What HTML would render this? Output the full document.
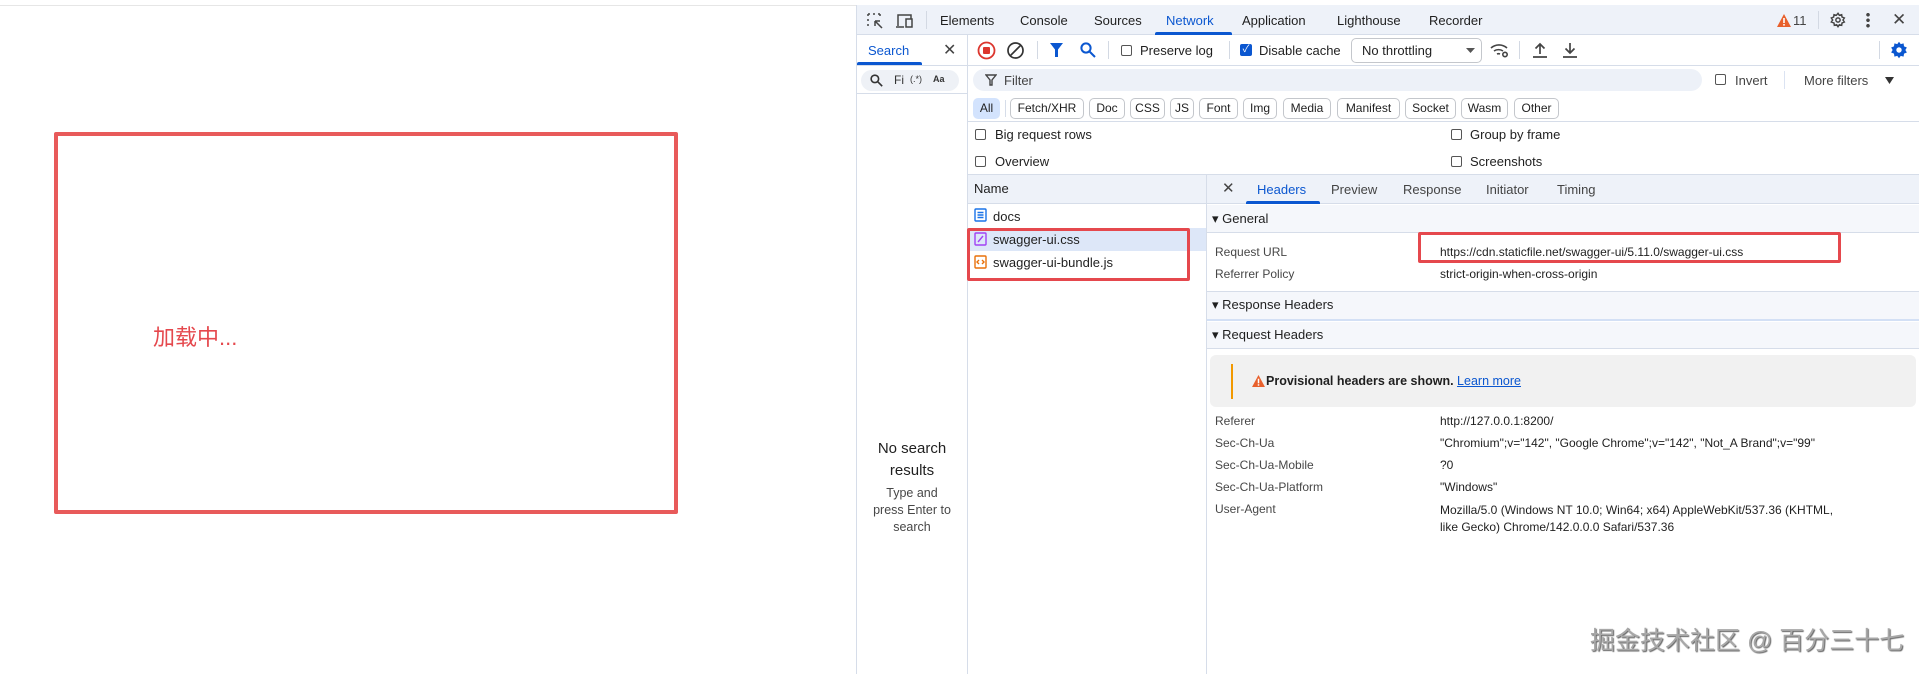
<!DOCTYPE html>
<html><head><meta charset="utf-8"><style>
*{margin:0;padding:0;box-sizing:border-box}
body{width:1919px;height:674px;position:relative;background:#fff;font-family:"Liberation Sans","Noto Sans CJK SC",sans-serif;color:#1f1f1f;overflow:hidden;font-size:12px}
.a{position:absolute;white-space:nowrap}
.t{font-size:13px;line-height:16px}
.hl{position:absolute;height:1px;background:#d6dde9}
.vl{position:absolute;width:1px;background:#d6dde9}
.sep{position:absolute;width:1px;height:18px;background:#d3d9e3}
.chip{position:absolute;top:98px;height:21px;border:1px solid #c4c7cc;border-radius:5px;font-size:12px;line-height:19px;text-align:center;color:#1f1f1f}
.cb{position:absolute;width:11px;height:11px;border:1px solid #555;border-radius:2px;background:#fff}
.lbl{position:absolute;font-size:12px;color:#474747;white-space:nowrap;line-height:14px}
.val{position:absolute;left:1440px;font-size:12px;color:#1f1f1f;white-space:nowrap;line-height:14px}
</style></head><body>
<div class="hl" style="left:0;top:5px;width:856px;background:#e6e6e6"></div>
<div class="a" style="left:54px;top:132px;width:624px;height:382px;border:4px solid #e85a5a;border-radius:2px"></div>
<div class="a" style="left:153px;top:325px;font-size:22px;color:#e5484d;line-height:26px">加载中...</div>

<div class="a" style="left:856px;top:5px;width:1063px;height:669px;background:#fff;border-left:1px solid #d6dde9"></div>
<div class="a" style="left:857px;top:5px;width:1062px;height:30px;background:#eef2f9;border-bottom:1px solid #d6dde9"></div>
<svg class="a" style="left:866px;top:12px" width="50" height="18" viewBox="0 0 50 18" fill="none" stroke="#444" stroke-width="1.5"><path d="M2 2h2M7 2h2M12 2h2M2 2v2M2 7v2M2 12v2M14 2v2M9 9l7 7M9 9h5M9 9v5"/><path d="M32 14V3h13v4M30 15h8M40 7h6v8h-6z"/></svg>
<div class="sep" style="left:926px;top:11px"></div>
<div class="a t" style="left:940px;top:13px">Elements</div>
<div class="a t" style="left:1020px;top:13px">Console</div>
<div class="a t" style="left:1094px;top:13px">Sources</div>
<div class="a t" style="left:1166px;top:13px;color:#0b57d0">Network</div>
<div class="a" style="left:1155px;top:32px;width:77px;height:3px;background:#0b57d0;border-radius:2px 2px 0 0"></div>
<div class="a t" style="left:1242px;top:13px">Application</div>
<div class="a t" style="left:1337px;top:13px">Lighthouse</div>
<div class="a t" style="left:1429px;top:13px">Recorder</div>
<svg class="a" style="left:1777px;top:14px" width="14" height="13" viewBox="0 0 14 13"><path d="M7 0L14 13H0z" fill="#e8602c"/><rect x="6.2" y="4" width="1.6" height="5" fill="#fff"/><rect x="6.2" y="10" width="1.6" height="1.6" fill="#fff"/></svg>
<div class="a t" style="left:1793px;top:13px;color:#444">11</div>
<div class="sep" style="left:1818px;top:11px"></div>
<svg class="a" style="left:1830px;top:12px" width="16" height="16" viewBox="0 0 24 24" fill="none" stroke="#444" stroke-width="2.2"><circle cx="12" cy="12" r="3.2"/><path d="M12 2l2 3 3.5-1 .5 3.5 3.5 1.5-2 3 2 3-3.5 1.5-.5 3.5-3.5-1-2 3-2-3-3.5 1-.5-3.5L2 15l2-3-2-3 3.5-1.5L6 4l3.5 1z"/></svg>
<div class="a" style="left:1866px;top:12px;width:4px;height:16px;background:radial-gradient(circle,#444 1.6px,transparent 2px) 0 0/4px 5.5px"></div>
<div class="a" style="left:1892px;top:10px;font-size:17px;color:#444">✕</div>

<div class="hl" style="left:857px;top:65px;width:1062px"></div>
<div class="a t" style="left:868px;top:43px;color:#0b57d0">Search</div>
<div class="a" style="left:857px;top:62px;width:65px;height:3px;background:#0b57d0;border-radius:2px 2px 0 0"></div>
<div class="a" style="left:943px;top:40px;font-size:16px;color:#444">✕</div>
<div class="vl" style="left:967px;top:35px;height:639px"></div>
<svg class="a" style="left:977px;top:41px" width="19" height="19" viewBox="0 0 19 19"><circle cx="9.5" cy="9.5" r="8" fill="none" stroke="#dc362e" stroke-width="1.8"/><rect x="6" y="6" width="7" height="7" rx="1" fill="#dc362e"/></svg>
<svg class="a" style="left:1006px;top:41px" width="19" height="19" viewBox="0 0 19 19" fill="none" stroke="#333" stroke-width="1.7"><circle cx="9.5" cy="9.5" r="7.5"/><path d="M4.2 14.8L14.8 4.2"/></svg>
<div class="sep" style="left:1037px;top:41px"></div>
<svg class="a" style="left:1050px;top:43px" width="13" height="14" viewBox="0 0 13 14"><path d="M0 0h13L8 6.5V14H5V6.5z" fill="#0b57d0"/></svg>
<svg class="a" style="left:1080px;top:42px" width="16" height="16" viewBox="0 0 16 16" fill="none" stroke="#0b57d0" stroke-width="2"><circle cx="6" cy="6" r="4.6"/><path d="M9.5 9.5L15 15"/></svg>
<div class="sep" style="left:1108px;top:41px"></div>
<div class="cb" style="left:1121px;top:45px"></div>
<div class="a t" style="left:1140px;top:43px">Preserve log</div>
<div class="sep" style="left:1229px;top:41px"></div>
<div class="a" style="left:1240px;top:44px;width:12px;height:12px;background:#0b57d0;border-radius:2px;color:#fff;font-size:10px;line-height:12px;text-align:center">✓</div>
<div class="a t" style="left:1259px;top:43px">Disable cache</div>
<div class="a" style="left:1351px;top:38px;width:131px;height:25px;border:1px solid #c4c7cc;border-radius:5px"></div>
<div class="a t" style="left:1362px;top:43px">No throttling</div>
<svg class="a" style="left:1466px;top:48px" width="9" height="5"><path d="M0 0h9L4.5 5z" fill="#555"/></svg>
<svg class="a" style="left:1490px;top:42px" width="19" height="16" viewBox="0 0 19 16" fill="none" stroke="#444" stroke-width="1.6"><path d="M1 6a12 12 0 0 1 16 0M4 9a8 8 0 0 1 9 0M7 12a3.5 3.5 0 0 1 3 0"/><circle cx="15" cy="12.5" r="2.2"/></svg>
<div class="sep" style="left:1519px;top:41px"></div>
<svg class="a" style="left:1532px;top:42px" width="16" height="16" viewBox="0 0 16 16" fill="none" stroke="#444" stroke-width="1.7"><path d="M8 12V2M3.5 6.5L8 2l4.5 4.5M1 15h14"/></svg>
<svg class="a" style="left:1562px;top:42px" width="16" height="16" viewBox="0 0 16 16" fill="none" stroke="#444" stroke-width="1.7"><path d="M8 1v10M3.5 6.5L8 11l4.5-4.5M1 15h14"/></svg>
<div class="sep" style="left:1879px;top:41px"></div>
<svg class="a" style="left:1890px;top:41px" width="18" height="18" viewBox="0 0 24 24"><path d="M12 1l2.3 3.2 3.8-1 .6 3.9 3.8 1.5-2 3.4 2 3.4-3.8 1.5-.6 3.9-3.8-1L12 23l-2.3-3.2-3.8 1-.6-3.9L1.5 15.4l2-3.4-2-3.4 3.8-1.5.6-3.9 3.8 1z" fill="#0b57d0"/><circle cx="12" cy="12" r="3.6" fill="#fff"/></svg>

<div class="a" style="left:861px;top:70px;width:98px;height:21px;background:#eef1f6;border-radius:11px"></div>
<svg class="a" style="left:870px;top:74px" width="13" height="13" viewBox="0 0 16 16" fill="none" stroke="#333" stroke-width="2"><circle cx="6" cy="6" r="4.6"/><path d="M9.5 9.5L15 15"/></svg>
<div class="a" style="left:894px;top:73px;font-size:12px;color:#333">Fi</div>
<div class="a" style="left:910px;top:74px;font-size:9px;color:#333">(.*)</div>
<div class="a" style="left:933px;top:74px;font-size:9px;color:#333;font-weight:bold">Aa</div>
<div class="hl" style="left:857px;top:93px;width:110px"></div>
<div class="a" style="left:973px;top:69px;width:729px;height:22px;background:#edf1f8;border-radius:11px"></div>
<svg class="a" style="left:985px;top:74px" width="12" height="12" viewBox="0 0 12 12" fill="none" stroke="#444" stroke-width="1.4"><path d="M1 1h10L7 6v5H5V6z"/></svg>
<div class="a t" style="left:1004px;top:73px;color:#444">Filter</div>
<div class="cb" style="left:1715px;top:74px"></div>
<div class="a t" style="left:1735px;top:73px;color:#444">Invert</div>
<div class="sep" style="left:1784px;top:71px;background:#dbe3f2"></div>
<div class="a t" style="left:1804px;top:73px;color:#444">More filters</div>
<svg class="a" style="left:1885px;top:77px" width="9" height="7"><path d="M0 0h9L4.5 7z" fill="#333"/></svg>

<div class="chip" style="left:973px;width:27px;background:#d3e3fd;border-color:#d3e3fd">All</div>
<div class="vl" style="left:1005px;top:100px;height:17px"></div>
<div class="chip" style="left:1010px;width:74px">Fetch/XHR</div>
<div class="chip" style="left:1089px;width:36px">Doc</div>
<div class="chip" style="left:1130px;width:35px">CSS</div>
<div class="chip" style="left:1170px;width:24px">JS</div>
<div class="chip" style="left:1199px;width:39px">Font</div>
<div class="chip" style="left:1243px;width:34px">Img</div>
<div class="chip" style="left:1283px;width:48px">Media</div>
<div class="chip" style="left:1337px;width:63px">Manifest</div>
<div class="chip" style="left:1405px;width:51px">Socket</div>
<div class="chip" style="left:1461px;width:47px">Wasm</div>
<div class="chip" style="left:1514px;width:45px">Other</div>
<div class="hl" style="left:968px;top:121px;width:951px"></div>

<div class="cb" style="left:975px;top:129px"></div>
<div class="a t" style="left:995px;top:127px">Big request rows</div>
<div class="cb" style="left:975px;top:156px"></div>
<div class="a t" style="left:995px;top:154px">Overview</div>
<div class="cb" style="left:1451px;top:129px"></div>
<div class="a t" style="left:1470px;top:127px">Group by frame</div>
<div class="cb" style="left:1451px;top:156px"></div>
<div class="a t" style="left:1470px;top:154px">Screenshots</div>
<div class="hl" style="left:968px;top:174px;width:951px"></div>

<div class="a" style="left:968px;top:175px;width:951px;height:29px;background:#eef2f9;border-bottom:1px solid #d6dde9"></div>
<div class="a t" style="left:974px;top:181px">Name</div>
<div class="vl" style="left:1206px;top:175px;height:499px"></div>
<div class="a" style="left:1222px;top:179px;font-size:15px;color:#444">✕</div>
<div class="a t" style="left:1257px;top:182px;color:#0b57d0">Headers</div>
<div class="a" style="left:1246px;top:201px;width:74px;height:3px;background:#0b57d0;border-radius:2px 2px 0 0"></div>
<div class="a t" style="left:1331px;top:182px;color:#444">Preview</div>
<div class="a t" style="left:1403px;top:182px;color:#444">Response</div>
<div class="a t" style="left:1486px;top:182px;color:#444">Initiator</div>
<div class="a t" style="left:1557px;top:182px;color:#444">Timing</div>

<div class="a" style="left:969px;top:228px;width:237px;height:23px;background:#dde7f8"></div>
<svg class="a" style="left:974px;top:208px" width="13" height="14" viewBox="0 0 13 14" fill="none" stroke="#1a73e8" stroke-width="1.4"><rect x="1" y="1" width="11" height="12" rx="1"/><path d="M3.5 4.5h6M3.5 7h6M3.5 9.5h6"/></svg>
<div class="a t" style="left:993px;top:209px">docs</div>
<svg class="a" style="left:974px;top:232px" width="13" height="14" viewBox="0 0 13 14" fill="none" stroke="#a142f4" stroke-width="1.4"><rect x="1" y="1" width="11" height="12" rx="1"/><path d="M4 10l5-6"/></svg>
<div class="a t" style="left:993px;top:232px">swagger-ui.css</div>
<svg class="a" style="left:974px;top:255px" width="13" height="14" viewBox="0 0 13 14" fill="none" stroke="#e8710a" stroke-width="1.4"><rect x="1" y="1" width="11" height="12" rx="1"/><path d="M5 5l-2 2 2 2M8 5l2 2-2 2"/></svg>
<div class="a t" style="left:993px;top:255px">swagger-ui-bundle.js</div>
<div class="a" style="left:967px;top:228px;width:223px;height:53px;border:3px solid #e5484d;border-radius:2px"></div>

<div class="a" style="left:1207px;top:205px;width:712px;height:28px;background:#f5f7fb;border-bottom:1px solid #d6dde9"></div>
<div class="a t" style="left:1212px;top:211px">▾ General</div>
<div class="lbl" style="left:1215px;top:245px">Request URL</div>
<div class="val" style="top:245px">https://cdn.staticfile.net/swagger-ui/5.11.0/swagger-ui.css</div>
<div class="a" style="left:1418px;top:232px;width:423px;height:31px;border:3px solid #e5484d;border-radius:2px"></div>
<div class="lbl" style="left:1215px;top:267px">Referrer Policy</div>
<div class="val" style="top:267px">strict-origin-when-cross-origin</div>
<div class="a" style="left:1207px;top:291px;width:712px;height:30px;background:#f5f7fb;border-top:1px solid #d6dde9;border-bottom:2px solid #d3e0f5"></div>
<div class="a t" style="left:1212px;top:297px">▾ Response Headers</div>
<div class="a" style="left:1207px;top:322px;width:712px;height:27px;background:#f5f7fb;border-bottom:1px solid #d6dde9"></div>
<div class="a t" style="left:1212px;top:327px">▾ Request Headers</div>
<div class="a" style="left:1210px;top:355px;width:706px;height:52px;background:#f1f1f1;border-radius:6px"></div>
<div class="a" style="left:1231px;top:364px;width:2px;height:35px;background:#f29900"></div>
<svg class="a" style="left:1252px;top:375px" width="13" height="12" viewBox="0 0 14 13"><path d="M7 0L14 13H0z" fill="#e8602c"/><rect x="6.2" y="4" width="1.6" height="5" fill="#fff"/><rect x="6.2" y="10" width="1.6" height="1.6" fill="#fff"/></svg>
<div class="a" style="left:1266px;top:374px;font-size:12.5px;font-weight:bold">Provisional headers are shown. <span style="font-weight:normal;color:#0b57d0;text-decoration:underline">Learn more</span></div>
<div class="lbl" style="left:1215px;top:414px">Referer</div><div class="val" style="top:414px">http://127.0.0.1:8200/</div>
<div class="lbl" style="left:1215px;top:436px">Sec-Ch-Ua</div><div class="val" style="top:436px">"Chromium";v="142", "Google Chrome";v="142", "Not_A Brand";v="99"</div>
<div class="lbl" style="left:1215px;top:458px">Sec-Ch-Ua-Mobile</div><div class="val" style="top:458px">?0</div>
<div class="lbl" style="left:1215px;top:480px">Sec-Ch-Ua-Platform</div><div class="val" style="top:480px">"Windows"</div>
<div class="lbl" style="left:1215px;top:502px">User-Agent</div><div class="val" style="top:502px;line-height:17px">Mozilla/5.0 (Windows NT 10.0; Win64; x64) AppleWebKit/537.36 (KHTML,<br>like Gecko) Chrome/142.0.0.0 Safari/537.36</div>

<div class="a" style="left:857px;top:438px;width:110px;text-align:center;font-size:15px;line-height:22px;white-space:normal">No search<br>results</div>
<div class="a" style="left:857px;top:485px;width:110px;text-align:center;font-size:12.5px;line-height:17px;color:#474747">Type and<br>press Enter to<br>search</div>

<div class="a" style="left:1590px;top:627px;font-size:25px;line-height:28px;color:#a8a8a8;text-shadow:1px 1px 1px #666">掘金技术社区 @ 百分三十七</div>
</body></html>
